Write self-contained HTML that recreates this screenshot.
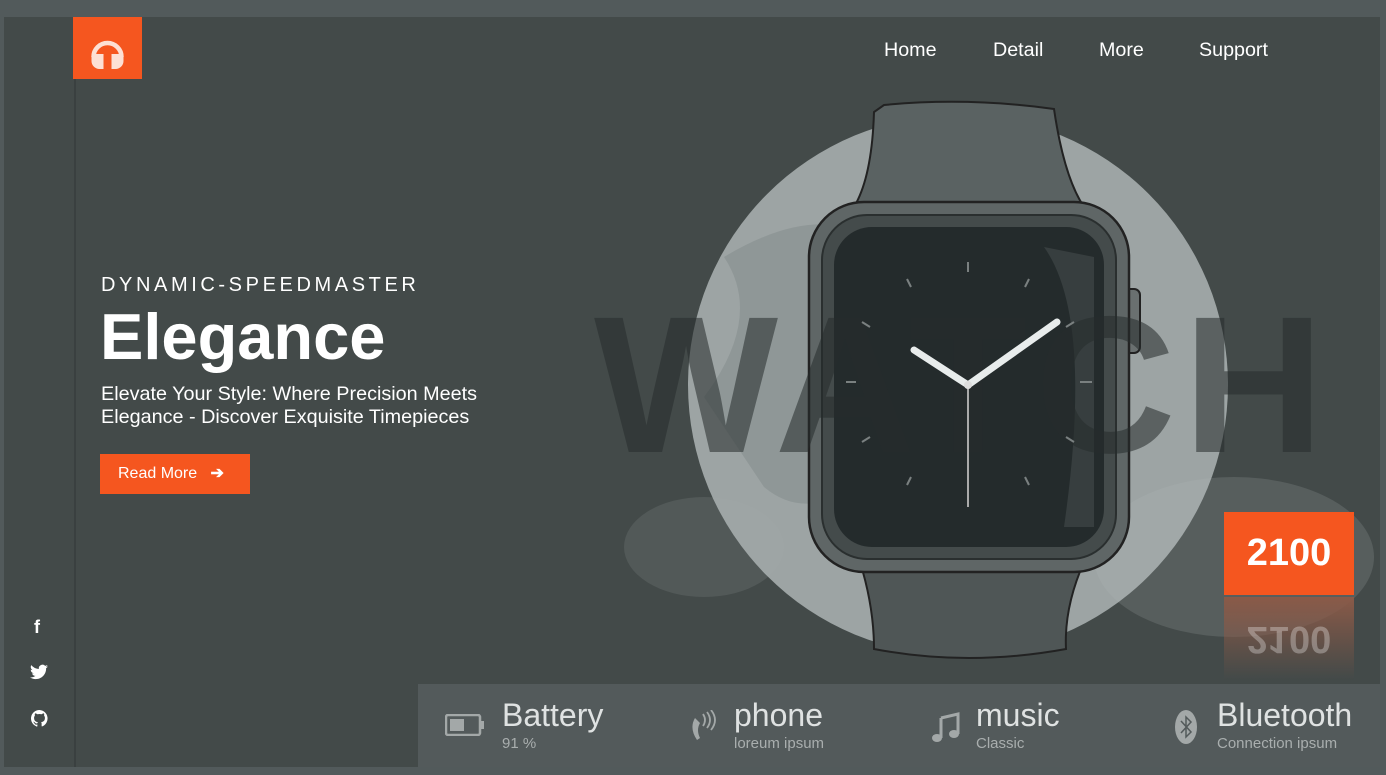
<!DOCTYPE html>
<html><head><style>
*{margin:0;padding:0;box-sizing:border-box}
body{width:1386px;height:775px;background:#525a5b;font-family:"Liberation Sans",sans-serif;overflow:hidden;position:relative}
.panel{position:absolute;left:4px;top:17px;width:1376px;height:750px;background:#434a49;overflow:hidden}
.vline{position:absolute;left:70px;top:0;width:2px;height:750px;background:#3a4040}
.logo{position:absolute;left:69px;top:0;width:69px;height:62px;background:#f5561f}
nav{position:absolute;top:22px;left:880px;color:#fff;font-size:19.7px}
nav span{position:absolute;white-space:nowrap}
.sub{position:absolute;left:97px;top:257px;color:#fff;font-size:20px;letter-spacing:3.6px}
h1{position:absolute;left:96px;top:282px;color:#fff;font-size:65px;font-weight:bold}
.desc{position:absolute;left:97px;top:366px;color:#fff;font-size:19.8px;line-height:23px;width:420px}
.btn{position:absolute;left:96px;top:437px;width:150px;height:40px;background:#f5561f;color:#fff;font-size:16px;line-height:40px;padding-left:18px}
.price{position:absolute;left:1220px;top:495px;width:130px;height:83px;background:#f5561f;color:#fff;font-size:38px;font-weight:bold;text-align:center;line-height:83px}
.refl{position:absolute;left:1220px;top:580px;width:130px;height:83px;background:linear-gradient(rgba(67,74,73,0),#8a5a48);color:rgba(255,255,255,.3);font-size:38px;font-weight:bold;text-align:center;line-height:83px;transform:scaleY(-1)}
.bar{position:absolute;left:414px;top:667px;width:962px;height:83px;background:#535a5b}
.it{position:absolute;top:13px;color:#dfe2e2}
.it b{font-weight:normal;font-size:32px;display:block}
.it i{font-style:normal;font-size:15px;color:#a9aeae;display:block;margin-top:1px}
.soc{position:absolute;left:28px;color:#fff;font-size:18px;font-weight:bold}
</style></head><body>
<div class="panel">
<div class="vline"></div>
<div class="logo"><svg width="69" height="62" viewBox="0 0 69 62"><path d="M20.5 40 A14 14 0 1 1 48.5 40" fill="none" stroke="#fde0d4" stroke-width="4.5"/><path d="M18.5 37 h12 v15 h-4 a8 8 0 0 1 -8 -8z M50.5 37 h-12 v15 h4 a8 8 0 0 0 8 -8z" fill="#fde0d4"/></svg></div>
<nav><span style="left:0">Home</span><span style="left:109px">Detail</span><span style="left:215px">More</span><span style="left:315px">Support</span></nav>
<div class="sub">DYNAMIC-SPEEDMASTER</div>
<h1>Elegance</h1>
<div class="desc">Elevate Your Style: Where Precision Meets Elegance - Discover Exquisite Timepieces</div>
<div class="btn">Read More &nbsp;&nbsp;<b>➔</b></div>
<svg style="position:absolute;left:0;top:0" width="1376" height="750">
<circle cx="954" cy="368" r="270" fill="#9da4a4"/>
<path d="M700 380 Q760 300 720 240 Q820 180 880 230 Q830 330 900 420 Q820 520 760 470z" fill="#7f8787" opacity=".45"/>
<ellipse cx="1230" cy="540" rx="140" ry="80" fill="#b5baba" opacity=".18"/>
<ellipse cx="700" cy="530" rx="80" ry="50" fill="#a8adad" opacity=".15"/>
<path d="M880 88 Q964 80 1050 92 Q1060 160 1080 190 L850 190 Q868 160 870 95z" fill="#5a6262" stroke="#222" stroke-width="2"/>
<path d="M856 545 L1080 545 Q1060 590 1062 632 Q964 650 870 632 Q870 590 856 545z" fill="#4f5656" stroke="#222" stroke-width="2"/>
<rect x="1120" y="272" width="16" height="64" rx="6" fill="#6a7070" stroke="#222" stroke-width="2"/>
<rect x="805" y="185" width="320" height="370" rx="55" fill="#5f6666" stroke="#222" stroke-width="2.5"/>
<rect x="818" y="198" width="294" height="344" rx="45" fill="#444b4b" stroke="#2a2f2f" stroke-width="2"/>
<rect x="830" y="210" width="270" height="320" rx="38" fill="#242b2c"/>
<path d="M1040 230 Q1090 300 1060 510 L1090 510 L1090 240z" fill="#4a5252" opacity=".5"/>
<text x="590" y="435" font-family="Liberation Sans" font-weight="bold" font-size="195" fill="#262c2c" opacity=".55" textLength="730">WATCH</text>
<g stroke="#7a8080" stroke-width="2">
<line x1="964" y1="245" x2="964" y2="255"/><line x1="964" y1="470" x2="964" y2="482"/>
<line x1="842" y1="365" x2="852" y2="365"/><line x1="1076" y1="365" x2="1088" y2="365"/>
<line x1="903" y1="262" x2="907" y2="270"/><line x1="1025" y1="262" x2="1021" y2="270"/>
<line x1="903" y1="468" x2="907" y2="460"/><line x1="1025" y1="468" x2="1021" y2="460"/>
<line x1="858" y1="305" x2="866" y2="310"/><line x1="1070" y1="305" x2="1062" y2="310"/>
<line x1="858" y1="425" x2="866" y2="420"/><line x1="1070" y1="425" x2="1062" y2="420"/>
</g>
<line x1="964" y1="368" x2="964" y2="490" stroke="#aaa" stroke-width="2"/>
<line x1="964" y1="368" x2="910" y2="333" stroke="#e8ecec" stroke-width="7" stroke-linecap="round"/>
<line x1="964" y1="368" x2="1053" y2="305" stroke="#e8ecec" stroke-width="7" stroke-linecap="round"/>
<circle cx="964" cy="368" r="4" fill="#ddd"/>
</svg>
<div class="price">2100</div>
<div class="refl">2100</div>
<div class="soc" style="top:600px;left:30px">f</div>
<div class="soc" style="top:647px;left:26px"><svg width="18" height="16" viewBox="0 0 24 20"><path d="M24 2.5a10 10 0 0 1-2.8.8A5 5 0 0 0 23.3.6a10 10 0 0 1-3.1 1.2A4.9 4.9 0 0 0 11.8 6 14 14 0 0 1 1.7.9a4.9 4.9 0 0 0 1.5 6.6A4.9 4.9 0 0 1 1 6.9a4.9 4.9 0 0 0 3.9 4.8 5 5 0 0 1-2.2.1 4.9 4.9 0 0 0 4.6 3.4A9.9 9.9 0 0 1 0 17.2 14 14 0 0 0 7.5 19.5c9 0 14-7.5 14-14v-.6A10 10 0 0 0 24 2.5z" fill="#fff"/></svg></div>
<div class="soc" style="top:693px;left:27px"><svg width="17" height="17" viewBox="0 0 16 16"><path d="M8 0a8 8 0 0 0-2.5 15.6c.4 0 .5-.2.5-.4v-1.5c-2.2.5-2.7-1-2.7-1-.4-.9-.9-1.2-.9-1.2-.7-.5.1-.5.1-.5.8.1 1.2.8 1.2.8.7 1.3 1.9.9 2.3.7.1-.5.3-.9.5-1.1-1.8-.2-3.6-.9-3.6-4 0-.9.3-1.6.8-2.1-.1-.2-.4-1 .1-2.1 0 0 .7-.2 2.2.8a7.5 7.5 0 0 1 4 0c1.5-1 2.2-.8 2.2-.8.4 1.1.2 1.9.1 2.1.5.6.8 1.3.8 2.1 0 3.1-1.9 3.8-3.6 4 .3.2.5.7.5 1.4v2.2c0 .2.1.5.6.4A8 8 0 0 0 8 0z" fill="#fff"/></svg></div>
<div class="bar">
<svg style="position:absolute;left:27px;top:30px" width="40" height="22"><rect x="1" y="1" width="34" height="20" rx="2" fill="none" stroke="#a3a8a8" stroke-width="2.5"/><rect x="5" y="5" width="14" height="12" fill="#a3a8a8"/><rect x="36" y="7" width="3" height="8" fill="#a3a8a8"/></svg>
<div class="it" style="left:84px"><b>Battery</b><i>91 %</i></div>
<svg style="position:absolute;left:273px;top:26px" width="26" height="34" viewBox="0 0 26 34"><path d="M4 8 q-6 10 2 22 l3-2 q-4-8 0-15z" fill="#a3a8a8"/><path d="M12 4 q4 6 0 12 M16 2 q6 8 0 16 M20 0 q8 10 0 20" fill="none" stroke="#a3a8a8" stroke-width="1.8"/></svg>
<div class="it" style="left:316px"><b>phone</b><i>loreum ipsum</i></div>
<svg style="position:absolute;left:514px;top:28px" width="28" height="30" viewBox="0 0 28 30"><path d="M9 6 L26 2 V22" fill="none" stroke="#a3a8a8" stroke-width="3"/><path d="M9 6 V26" stroke="#a3a8a8" stroke-width="3"/><ellipse cx="5" cy="26" rx="5" ry="4" fill="#a3a8a8"/><ellipse cx="22" cy="22" rx="5" ry="4" fill="#a3a8a8"/></svg>
<div class="it" style="left:558px"><b>music</b><i>Classic</i></div>
<svg style="position:absolute;left:756px;top:25px" width="24" height="36" viewBox="0 0 24 36"><ellipse cx="12" cy="18" rx="11" ry="17" fill="#a3a8a8"/><path d="M7 12 L17 23 L12 28 V8 L17 13 L7 24" fill="none" stroke="#535a5b" stroke-width="1.5"/></svg>
<div class="it" style="left:799px"><b>Bluetooth</b><i>Connection ipsum</i></div>
</div>
</div>
</body></html>
